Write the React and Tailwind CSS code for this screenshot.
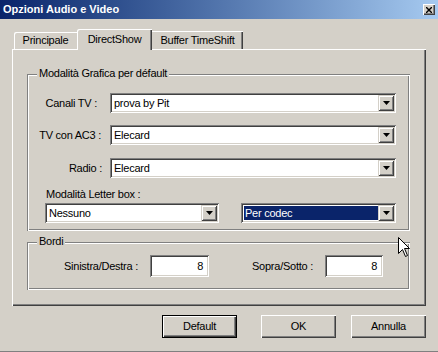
import React from "react";

const raised =
  "shadow-[inset_1px_1px_0_#fff,inset_-1px_-1px_0_#404040,inset_-2px_-2px_0_#808080]";
const sunken =
  "shadow-[inset_1px_1px_0_#808080,inset_-1px_-1px_0_#fff,inset_2px_2px_0_#404040,inset_-2px_-2px_0_#d4d0c8]";
const etched =
  "shadow-[inset_1px_1px_0_#808080,inset_-1px_-1px_0_#fff,inset_2px_2px_0_#fff,inset_-2px_-2px_0_#808080]";

const Arrow = () => (
  <div className="w-[16px] h-[16px] flex items-center justify-center bg-[#d4d0c8] shadow-[inset_1px_1px_0_#d4d0c8,inset_-1px_-1px_0_#404040,inset_2px_2px_0_#fff,inset_-2px_-2px_0_#808080]">
    <svg width="7" height="4" viewBox="0 0 7 4">
      <path d="M0 0h7L3.5 4z" fill="#000" />
    </svg>
  </div>
);

const Combo = ({ value, className, selected }) => (
  <div className={`h-[20px] bg-white flex items-stretch p-[2px] ${sunken} ${className}`}>
    <div className="flex-1 flex items-center py-[1px] pl-[1px]">
      <div
        className={`h-full w-full flex items-center pl-[1px] ${
          selected ? "bg-[#0a246a] text-white" : ""
        }`}
      >
        {value}
      </div>
    </div>
    <Arrow />
  </div>
);

const Field = ({ value, className }) => (
  <div className={`h-[22px] bg-white flex items-center justify-end pr-[6px] ${sunken} ${className}`}>
    {value}
  </div>
);

const Button = ({ children, isDefault, className }) => (
  <div
    className={`w-[75px] h-[23px] flex items-center justify-center bg-[#d4d0c8] ${
      isDefault ? "border border-black" : ""
    } ${raised} ${className}`}
  >
    {children}
  </div>
);

const Group = ({ title, className, children }) => (
  <div className={`relative ${etched} ${className}`}>
    <span className="absolute left-[10px] -top-[7px] px-[2px] leading-[13px] bg-[#d4d0c8]">
      {title}
    </span>
    {children}
  </div>
);

const App = () => {
  return (
    <div className="w-[438px] h-[352px] bg-[#d4d0c8] relative overflow-hidden border-b border-[#808080] font-['Liberation_Sans',Arial,sans-serif] text-[11px] tracking-[-0.25px] text-black">
      {/* title bar */}
      <div className="h-[19px] flex items-center pl-[3px] pr-[3px] bg-linear-to-r from-[#0a246a] to-[#a6caf0]">
        <span className="text-white font-bold tracking-normal">Opzioni Audio e Video</span>
        <div className={`ml-auto w-[12px] h-[11px] flex items-center justify-center bg-[#d4d0c8] ${raised}`}>
          <svg width="6" height="6" viewBox="0 0 6 6">
            <path d="M0 0L6 6M6 0L0 6" stroke="#000" strokeWidth="1.4" />
          </svg>
        </div>
      </div>

      <div className="px-[12px] pt-[10px]">
        {/* tabs */}
        <div className="relative z-10 flex items-end h-[20px] pl-[2px]">
          <div className="w-[63px] h-[17px] flex items-center justify-center rounded-tl-[2px] shadow-[inset_1px_1px_0_#fff]">
            Principale
          </div>
          <div className="w-[75px] h-[21px] -mb-[1px] flex items-center justify-center pb-[1px] bg-[#d4d0c8] rounded-tl-[2px] shadow-[inset_1px_1px_0_#fff,inset_-1px_0_0_#404040,inset_-2px_0_0_#808080]">
            DirectShow
          </div>
          <div className="w-[91px] h-[18px] flex items-center justify-center shadow-[inset_0_1px_0_#fff,inset_-1px_0_0_#404040,inset_-2px_0_0_#808080]">
            Buffer TimeShift
          </div>
        </div>

        {/* panel */}
        <div className="h-[257px] pl-[15px] pr-[16px] pt-[25px] shadow-[inset_1px_1px_0_#fff,inset_-1px_-1px_0_#404040,inset_-2px_-2px_0_#808080]">
          <Group title="Modalità Grafica per défault" className="h-[157px] pt-[19px]">
            <div className="flex items-center">
              <span className="w-[83px] text-right pr-[13px]">Canali TV :</span>
              <Combo value="prova by Pit" className="w-[286px]" />
            </div>
            <div className="flex items-center mt-[12px]">
              <span className="w-[83px] text-right pr-[9px]">TV con AC3 :</span>
              <Combo value="Elecard" className="w-[286px]" />
            </div>
            <div className="flex items-center mt-[13px]">
              <span className="w-[83px] text-right pr-[8px]">Radio :</span>
              <Combo value="Elecard" className="w-[286px]" />
            </div>
            <div className="pl-[19px] mt-[10px] leading-[13px]">Modalità Letter box :</div>
            <div className="flex items-center mt-[2px] pl-[18px]">
              <Combo value="Nessuno" className="w-[174px]" />
              <Combo value="Per codec" selected className="w-[155px] ml-[22px]" />
            </div>
          </Group>

          <Group title="Bordi" className="h-[48px] mt-[11px] pt-[13px]">
            <div className="flex items-center">
              <span className="w-[123px] text-right pr-[12px]">Sinistra/Destra :</span>
              <Field value="8" className="w-[59px]" />
              <span className="w-[116px] text-right pr-[12px]">Sopra/Sotto :</span>
              <Field value="8" className="w-[58px]" />
            </div>
          </Group>
        </div>

        {/* buttons */}
        <div className="flex justify-end mt-[9px]">
          <Button isDefault>Default</Button>
          <Button className="ml-[24px]">OK</Button>
          <Button className="ml-[15px]">Annulla</Button>
        </div>
      </div>

      {/* mouse pointer */}
      <svg className="absolute left-[398px] top-[237px]" width="13" height="21" viewBox="0 0 13 21">
        <path d="M0.5 0.5V16.5L4.5 12.5L7.5 19.5L9.5 18.5L6.5 11.5H11.5Z" fill="#fff" stroke="#000" />
      </svg>
    </div>
  );
};

export default App;
